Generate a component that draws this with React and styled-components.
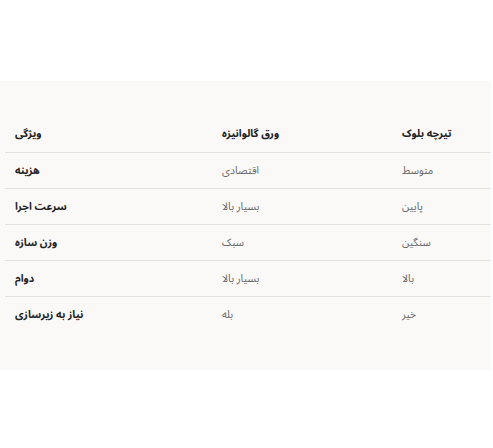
import React from "react";
import styled, { createGlobalStyle } from "styled-components";

const rows = [
  ["هزینه", "اقتصادی", "متوسط"],
  ["سرعت اجرا", "بسیار بالا", "پایین"],
  ["وزن سازه", "سبک", "سنگین"],
  ["دوام", "بسیار بالا", "بالا"],
  ["نیاز به زیرسازی", "بله", "خیر"],
];

const GlobalStyle = createGlobalStyle`
  body {
    margin: 0;
    background: #ffffff;
    font-family: "Noto Sans Arabic", "DejaVu Sans", sans-serif;
  }
`;

const Page = styled.div`
  padding-top: 81px;
  width: 491px;
`;

const Panel = styled.section`
  background: #faf9f7;
  padding: 35px 0 38px 5px;
`;

const Table = styled.table`
  width: 100%;
  border-collapse: collapse;
`;

const Th = styled.th`
  text-align: left;
  font-size: 10.5px;
  font-weight: bold;
  color: #222;
  height: 36px;
  padding: 0 10px;
  border-bottom: 1px solid #e4e1dc;
  width: ${(p) => p.$w}px;
`;

const Td = styled.td`
  text-align: left;
  height: 35px;
  padding: 0 10px;
  border-bottom: ${(p) => (p.$last ? "none" : "1px solid #e4e1dc")};
  font-size: 10.5px;
  font-weight: ${(p) => (p.$head ? "bold" : "normal")};
  color: ${(p) => (p.$head ? "#222" : "#666")};
`;

export default function App() {
  return (
    <Page>
      <GlobalStyle />
      <Panel>
        <Table>
          <thead>
            <tr>
              <Th $w={187}>ویژگی</Th>
              <Th $w={160}>ورق گالوانیزه</Th>
              <Th>تیرچه بلوک</Th>
            </tr>
          </thead>
          <tbody>
            {rows.map((r, i) => {
              const last = i === rows.length - 1;
              return (
                <tr key={i}>
                  <Td $head $last={last}>{r[0]}</Td>
                  <Td $last={last}>{r[1]}</Td>
                  <Td $last={last}>{r[2]}</Td>
                </tr>
              );
            })}
          </tbody>
        </Table>
      </Panel>
    </Page>
  );
}
